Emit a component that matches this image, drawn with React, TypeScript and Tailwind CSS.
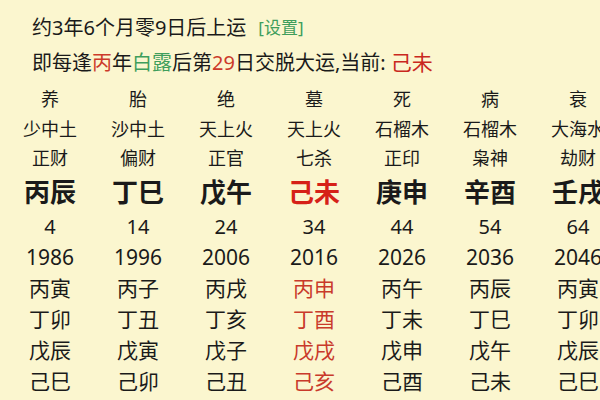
const font = { fontFamily: '"Noto Sans", "Noto Sans CJK SC", sans-serif' }

type Col = {
  zs: string
  nayin: string
  shishen: string
  pillar: string
  age: string
  year: string
  liunian: string[]
  current?: boolean
}

const cols: Col[] = [
  { zs: "养", nayin: "少中土", shishen: "正财", pillar: "丙辰", age: "4", year: "1986", liunian: ["丙寅", "丁卯", "戊辰", "己巳"] },
  { zs: "胎", nayin: "沙中土", shishen: "偏财", pillar: "丁巳", age: "14", year: "1996", liunian: ["丙子", "丁丑", "戊寅", "己卯"] },
  { zs: "绝", nayin: "天上火", shishen: "正官", pillar: "戊午", age: "24", year: "2006", liunian: ["丙戌", "丁亥", "戊子", "己丑"] },
  { zs: "墓", nayin: "天上火", shishen: "七杀", pillar: "己未", age: "34", year: "2016", liunian: ["丙申", "丁酉", "戊戌", "己亥"], current: true },
  { zs: "死", nayin: "石榴木", shishen: "正印", pillar: "庚申", age: "44", year: "2026", liunian: ["丙午", "丁未", "戊申", "己酉"] },
  { zs: "病", nayin: "石榴木", shishen: "枭神", pillar: "辛酉", age: "54", year: "2036", liunian: ["丙辰", "丁巳", "戊午", "己未"] },
  { zs: "衰", nayin: "大海水", shishen: "劫财", pillar: "壬戌", age: "64", year: "2046", liunian: ["丙寅", "丁卯", "戊辰", "己巳"] },
]

function Row({ children, className }: { children: (c: Col) => React.ReactNode; className: string }) {
  return (
    <div className={`grid grid-cols-[repeat(7,88px)] pl-[6px] ${className}`}>
      {cols.map((c, i) => (
        <div key={i} className="flex justify-center whitespace-nowrap">
          {children(c)}
        </div>
      ))}
    </div>
  )
}

export default function App() {
  return (
    <div className="w-[600px] h-[400px] overflow-hidden bg-[#fbf6cf] text-[#1a1a1a]" style={font}>
      {/* header */}
      <div className="pl-[32px] pt-[11px]">
        <div className="text-[20px] leading-[34px] flex items-center">
          <span>约3年6个月零9日后上运</span>
          <span className="ml-[12px] text-[17px] text-[#3f9e5c]">[设置]</span>
        </div>
        <div className="text-[20px] leading-[34px]">
          即每逢<span className="text-[#cc3a2a]">丙</span>年<span className="text-[#3f9e5c]">白露</span>后第
          <span className="text-[#cc3a2a]">29</span>日交脱大运,当前: <span className="text-[21px] text-[#c9281e]">己未</span>
        </div>
      </div>

      {/* dayun table */}
      <div className="mt-[4px]">
        <Row className="text-[18px] leading-[30px]">{(c) => c.zs}</Row>
        <Row className="text-[18px] leading-[30px]">{(c) => c.nayin}</Row>
        <Row className="text-[18px] leading-[29px]">{(c) => c.shishen}</Row>
        <Row className="text-[26px] leading-[38px] font-bold">
          {(c) => <span className={c.current ? "text-[#d62118]" : ""}>{c.pillar}</span>}
        </Row>
        <Row className="text-[20px] leading-[31px]">{(c) => c.age}</Row>
        <Row className="text-[21px] leading-[31px]">{(c) => c.year}</Row>
        {[0, 1, 2, 3].map((k) => (
          <Row key={k} className="text-[21px] leading-[31px]">
            {(c) => <span className={c.current ? "text-[#c93a2b]" : ""}>{c.liunian[k]}</span>}
          </Row>
        ))}
      </div>
    </div>
  )
}
